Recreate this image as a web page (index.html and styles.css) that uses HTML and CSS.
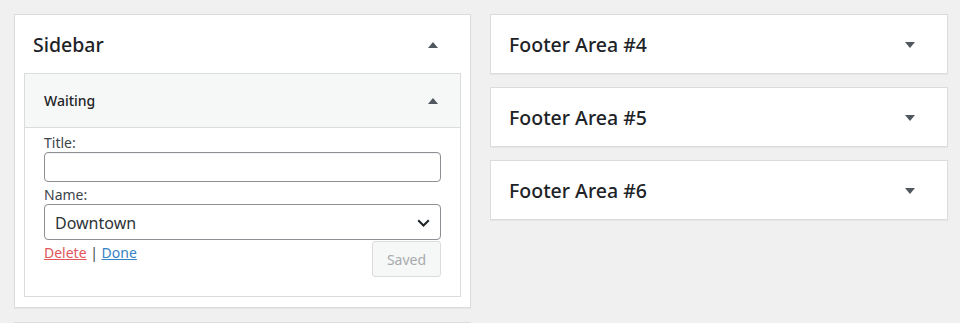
FILE: index.html
```html
<!DOCTYPE html>
<html lang="en">
<head>
<meta charset="utf-8">
<title>Widgets</title>
<link rel="stylesheet" href="styles.css">
</head>
<body>
<div class="page">
  <div class="col col-left">
    <section class="area">
      <div class="area-head">
        <h2 class="area-title">Sidebar</h2>
        <span class="tri tri-up"></span>
      </div>
      <div class="area-body">
        <div class="widget">
          <div class="widget-head">
            <h3 class="widget-title">Waiting</h3>
            <span class="tri tri-up"></span>
          </div>
          <div class="widget-body">
            <label class="field-label" for="w-title">Title:</label>
            <input class="text-input" id="w-title" type="text">
            <label class="field-label" for="w-name">Name:</label>
            <div class="select" id="w-name">
              <span class="select-value">Downtown</span>
              <svg class="chevron" width="13" height="8" viewBox="0 0 13 8"><path d="M1.2 1.2 L6.5 6.5 L11.8 1.2" fill="none" stroke="#1d2327" stroke-width="2"/></svg>
            </div>
            <div class="actions">
              <div class="links"><a class="link-delete" href="#">Delete</a> <span class="sep">|</span> <a class="link-done" href="#">Done</a></div>
              <button class="btn-saved" type="button">Saved</button>
            </div>
          </div>
        </div>
      </div>
    </section>
    <section class="area stub"></section>
  </div>
  <div class="col col-right">
    <section class="area">
      <div class="area-head">
        <h2 class="area-title">Footer Area #4</h2>
        <span class="tri tri-down"></span>
      </div>
    </section>
    <section class="area">
      <div class="area-head">
        <h2 class="area-title">Footer Area #5</h2>
        <span class="tri tri-down"></span>
      </div>
    </section>
    <section class="area">
      <div class="area-head">
        <h2 class="area-title">Footer Area #6</h2>
        <span class="tri tri-down"></span>
      </div>
    </section>
  </div>
</div>
</body>
</html>
```
FILE: styles.css
```css
* { box-sizing: border-box; }
html, body { margin: 0; padding: 0; }
body {
  background: #f0f0f1;
  font-family: "Noto Sans", "Open Sans", sans-serif;
  color: #3c434a;
  font-size: 14px;
  height: 323px;
  overflow: hidden;
}
.page {
  display: flex;
  gap: 19px;
  padding: 14px 12px 0 14px;
}
.col { display: flex; flex-direction: column; }
.col-left { width: 457px; gap: 14px; }
.col-right { width: 458px; gap: 13px; }

.area {
  background: #fff;
  border: 1px solid #dcdcde;
  box-shadow: 0 1px 1px rgba(0,0,0,0.04);
}
.area-head {
  height: 58px;
  display: flex;
  align-items: center;
  justify-content: space-between;
  padding: 1px 32px 0 18px;
}
.area-title {
  margin: 0;
  font-size: 19.5px;
  font-weight: 500;
  color: #1d2327;
  line-height: 1;
}
.area-body { padding: 0 9px 10px 9px; }
.stub { height: 1px; border-bottom: 0; box-shadow: none; }

.tri {
  width: 0; height: 0;
  border-left: 5px solid transparent;
  border-right: 5px solid transparent;
}
.tri-up { border-bottom: 6px solid #50575e; }
.tri-down { border-top: 6px solid #50575e; }

.widget {
  border: 1px solid #dcdcde;
  background: #fff;
}
.widget-head {
  height: 54px;
  background: #f6f7f7;
  border-bottom: 1px solid #dcdcde;
  display: flex;
  align-items: center;
  justify-content: space-between;
  padding: 0 22px 0 19px;
}
.widget-title {
  margin: 0;
  font-size: 14px;
  font-weight: 500;
  color: #1d2327;
}
.widget-body {
  padding: 5px 19px 19px 19px;
  display: flex;
  flex-direction: column;
}
.field-label {
  display: block;
  line-height: 19px;
  font-size: 14px;
  color: #3c434a;
}
.text-input {
  height: 30px;
  width: 100%;
  border: 1px solid #8c8f94;
  border-radius: 4px;
  box-shadow: inset 0 1px 1px rgba(0,0,0,0.05);
  margin: 0 0 3px 0;
}
.select {
  height: 36px;
  border: 1px solid #8c8f94;
  border-radius: 4px;
  display: flex;
  align-items: center;
  justify-content: space-between;
  padding: 1px 10px 0 10px;
  font-size: 16px;
  color: #2c3338;
}
.chevron { display: block; }
.actions {
  display: flex;
  justify-content: space-between;
  align-items: flex-start;
  margin-top: 1px;
}
.links { padding-top: 2px; line-height: 19px; }
.link-delete { color: #e0565b; text-decoration: underline; }
.link-done { color: #3582c4; text-decoration: underline; }
.sep { color: #3c434a; }
.btn-saved {
  width: 69px;
  height: 36px;
  background: #f6f7f7;
  border: 1px solid #dcdcde;
  border-radius: 3px;
  color: #a7aaad;
  font-family: inherit;
  font-size: 14px;
  padding: 0;
}
```
